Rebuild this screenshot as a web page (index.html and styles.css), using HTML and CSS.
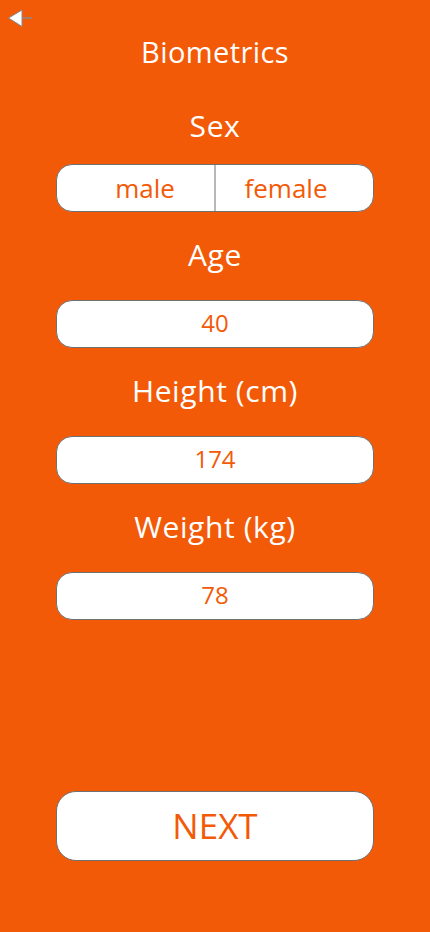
FILE: index.html
```html
<!DOCTYPE html>
<html>
<head>
<meta charset="utf-8">
<link rel="stylesheet" href="styles.css">
</head>
<body>
<div class="page">
  <div class="topbar">
    <svg class="back" width="40" height="32" viewBox="0 0 40 32">
      <line x1="22" y1="18" x2="32" y2="18" stroke="#8a8a8a" stroke-width="1.5"/>
      <polygon points="8.5,18 22,10 22,26.5" fill="#fff" stroke="#8a8a8a" stroke-width="1"/>
    </svg>
  </div>
  <h1 class="title">Biometrics</h1>
  <div class="label label-sex">Sex</div>
  <div class="segment">
    <div class="seg seg-left">male</div>
    <div class="seg seg-right">female</div>
  </div>
  <div class="label">Age</div>
  <div class="field">40</div>
  <div class="label">Height (cm)</div>
  <div class="field">174</div>
  <div class="label">Weight (kg)</div>
  <div class="field">78</div>
  <div class="spacer"></div>
  <div class="next">NEXT</div>
</div>
</body>
</html>
```

FILE: styles.css
```css
html, body {
  margin: 0;
  padding: 0;
}
body {
  background: #f25a08;
  font-family: "Open Sans", "Noto Sans", sans-serif;
  color: #fff;
}
.page {
  height: 932px;
  display: flex;
  flex-direction: column;
  align-items: center;
}
.topbar {
  align-self: stretch;
  height: 32px;
}
.back {
  display: block;
}
.title {
  margin: 0;
  font-weight: 400;
  font-size: 29px;
  letter-spacing: 0.4px;
  line-height: 40px;
  height: 40px;
  text-align: center;
}
.label {
  font-size: 30px;
  letter-spacing: 0.6px;
  line-height: 86px;
  height: 88px;
  text-align: center;
}
.label-sex {
  box-sizing: border-box;
  height: 92px;
  line-height: 40px;
  padding-top: 34px;
}
.segment {
  width: 316px;
  height: 46px;
  border: 1px solid #707070;
  border-radius: 16px;
  background: #fff;
  display: flex;
  overflow: hidden;
}
.seg {
  color: #f25a08;
  font-size: 26px;
  line-height: 46px;
  text-align: center;
}
.seg-left {
  box-sizing: border-box;
  width: 159px;
  border-right: 2px solid #b8b8b8;
  padding-left: 19px;
}
.seg-right {
  flex: 1;
  padding-right: 17px;
}
.field {
  width: 316px;
  height: 46px;
  border: 1px solid #707070;
  border-radius: 16px;
  background: #fff;
  color: #f25a08;
  font-size: 24px;
  line-height: 44px;
  text-align: center;
}
.spacer {
  height: 171px;
}
.next {
  width: 316px;
  height: 68px;
  border: 1px solid #707070;
  border-radius: 20px;
  background: #fff;
  color: #f25a08;
  font-size: 35px;
  line-height: 68px;
  text-align: center;
}
```
